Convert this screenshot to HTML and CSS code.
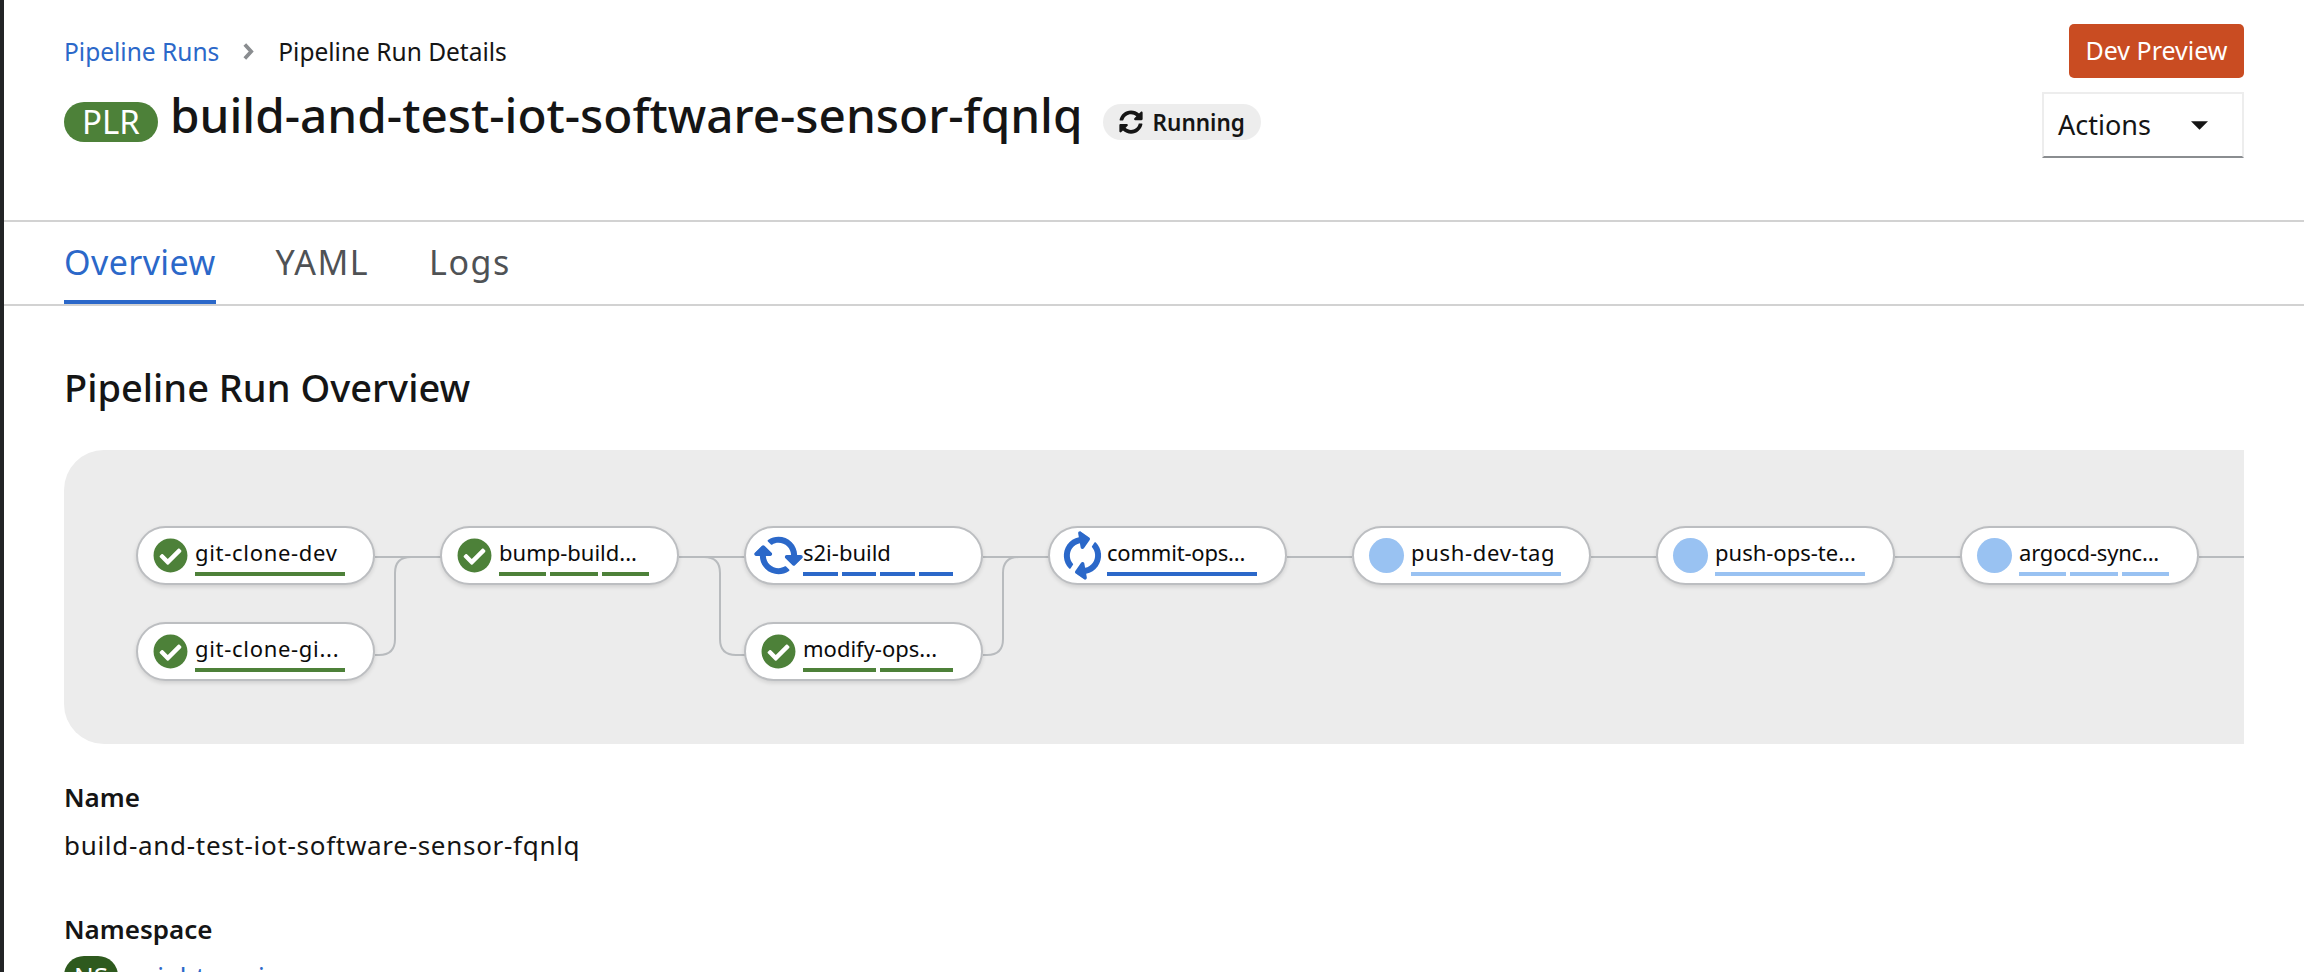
FILE: index.html
```html
<!DOCTYPE html>
<html lang="en-US">
<head>
    <meta charset="UTF-8" />
    <title>Pipeline Run Details</title>
    <link rel="stylesheet" href="styles.css">
</head>
<body>
    <div class="page">
        <header class="head">
            <div class="head-left">
                <nav class="crumbs">
                    <a href="#">Pipeline Runs</a>
                    <svg class="crumb-sep" viewBox="0 0 10 16"><path d="M2 1.500 8 8l-6 6.500" fill="none" stroke="#8a8d90" stroke-width="3.500"/></svg>
                    <span>Pipeline Run Details</span>
                </nav>
                <div class="title-row">
                    <span class="plr">PLR</span>
                    <h1>build-and-test-iot-software-sensor-fqnlq</h1>
                    <span class="status">
                        <svg class="status-icon" viewBox="0 0 512 512"><use href="#sync"/></svg>
                        Running
                    </span>
                </div>
            </div>
            <div class="head-right">
                <span class="preview">Dev Preview</span>
                <button class="actions">Actions <svg class="caret" viewBox="0 0 16 10"><path d="M0 1h16L8 9z" fill="#151515"/></svg></button>
            </div>
        </header>

        <nav class="tabs">
            <a class="tab active" href="#">Overview</a>
            <a class="tab" href="#">YAML</a>
            <a class="tab" href="#">Logs</a>
        </nav>

        <main class="main">
            <h2>Pipeline Run Overview</h2>

            <div class="graph">
                <!-- edges are drawn under the nodes, in graph coordinates -->
                <svg class="edges" width="2180" height="294" fill="none" stroke="#b8bbbe" stroke-width="2">
                    <path d="M311 107H377"/>
                    <path d="M311 205h4q16 0 16-16V123q0-16 16-16"/>
                    <path d="M615 107H681"/>
                    <path d="M640 107q16 0 16 16v66q0 16 16 16h9"/>
                    <path d="M919 107H985"/>
                    <path d="M919 205h4q16 0 16-16V123q0-16 16-16"/>
                    <path d="M1223 107H1288"/>
                    <path d="M1527 107H1593"/>
                    <path d="M1831 107H1897"/>
                    <path d="M2135 107H2180"/>
                </svg>

                <div class="col">
                    <div class="node">
                        <svg class="node-icon green" viewBox="0 0 512 512"><use href="#check"/></svg>
                        <div class="node-body">
                            <span class="node-name wide">git-clone-dev</span>
                            <div class="bars green"><i></i></div>
                        </div>
                    </div>
                    <div class="node">
                        <svg class="node-icon green" viewBox="0 0 512 512"><use href="#check"/></svg>
                        <div class="node-body">
                            <span class="node-name wide">git-clone-gi...</span>
                            <div class="bars green"><i></i></div>
                        </div>
                    </div>
                </div>

                <div class="col">
                    <div class="node">
                        <svg class="node-icon green" viewBox="0 0 512 512"><use href="#check"/></svg>
                        <div class="node-body">
                            <span class="node-name">bump-build...</span>
                            <div class="bars green"><i></i><i></i><i></i></div>
                        </div>
                    </div>
                </div>

                <div class="col">
                    <div class="node">
                        <svg class="node-spin spin-a" viewBox="0 0 512 512"><use href="#sync"/></svg>
                        <div class="node-body">
                            <span class="node-name">s2i-build</span>
                            <div class="bars blue"><i></i><i></i><i></i><i></i></div>
                        </div>
                    </div>
                    <div class="node">
                        <svg class="node-icon green" viewBox="0 0 512 512"><use href="#check"/></svg>
                        <div class="node-body">
                            <span class="node-name">modify-ops...</span>
                            <div class="bars green"><i></i><i></i></div>
                        </div>
                    </div>
                </div>

                <div class="col">
                    <div class="node">
                        <svg class="node-spin spin-b" viewBox="0 0 512 512"><use href="#sync"/></svg>
                        <div class="node-body">
                            <span class="node-name narrow">commit-ops...</span>
                            <div class="bars blue"><i></i></div>
                        </div>
                    </div>
                </div>

                <div class="col">
                    <div class="node">
                        <span class="node-dot"></span>
                        <div class="node-body">
                            <span class="node-name wide">push-dev-tag</span>
                            <div class="bars light"><i></i></div>
                        </div>
                    </div>
                </div>

                <div class="col">
                    <div class="node">
                        <span class="node-dot"></span>
                        <div class="node-body">
                            <span class="node-name">push-ops-te...</span>
                            <div class="bars light"><i></i></div>
                        </div>
                    </div>
                </div>

                <div class="col">
                    <div class="node">
                        <span class="node-dot"></span>
                        <div class="node-body">
                            <span class="node-name narrow">argocd-sync...</span>
                            <div class="bars light"><i></i><i></i><i></i></div>
                        </div>
                    </div>
                </div>
            </div>

            <dl class="details">
                <dt>Name</dt>
                <dd>build-and-test-iot-software-sensor-fqnlq</dd>
                <dt>Namespace</dt>
                <dd class="ns-row"><span class="ns">NS</span> <a href="#">wrighton-ci</a></dd>
            </dl>
        </main>
    </div>

    <svg class="defs" width="0" height="0">
        <symbol id="sync" viewBox="0 0 512 512"><path fill="currentColor" d="M370.72 133.28C339.458 104.008 298.888 87.962 255.848 88c-77.458.068-144.328 53.178-162.791 126.85-1.344 5.363-6.122 9.15-11.651 9.15H24.103c-7.498 0-13.194-6.807-11.807-14.176C33.933 94.924 134.813 8 256 8c66.448 0 126.791 26.136 171.315 68.685L463.03 40.97C478.149 25.851 504 36.559 504 57.941V192c0 13.255-10.745 24-24 24H345.941c-21.382 0-32.09-25.851-16.971-40.971l41.75-41.749zM32 296h134.059c21.382 0 32.09 25.851 16.971 40.971l-41.75 41.75c31.262 29.273 71.835 45.319 114.876 45.28 77.418-.07 144.315-53.144 162.787-126.849 1.344-5.363 6.122-9.15 11.651-9.15h57.304c7.498 0 13.194 6.807 11.807 14.176C478.067 417.076 377.187 504 256 504c-66.448 0-126.791-26.136-171.315-68.685L48.97 471.03C33.851 486.149 8 475.441 8 454.059V320c0-13.255 10.745-24 24-24z"/></symbol>
        <symbol id="check" viewBox="0 0 512 512"><path fill="currentColor" d="M504 256c0 136.967-111.033 248-248 248S8 392.967 8 256 119.033 8 256 8s248 111.033 248 248zM227.314 387.314l184-184c6.248-6.248 6.248-16.379 0-22.627l-22.627-22.627c-6.248-6.249-16.379-6.249-22.628 0L216 308.118l-70.059-70.059c-6.248-6.248-16.379-6.248-22.628 0l-22.627 22.627c-6.248 6.248-6.248 16.379 0 22.627l104 104c6.249 6.25 16.379 6.25 22.628.001z"/></symbol>
    </svg>
</body>
</html>
```

FILE: styles.css
```css
* {
    margin: 0;
    padding: 0;
    box-sizing: border-box;
}

html, body {
    height: 972px;
    overflow: hidden;
}

body {
    font-family: 'Noto Sans', sans-serif;
    font-size: 24px;
    color: #151515;
    background: #fff;
}

a {
    color: #2b68c9;
    text-decoration: none;
}

.page {
    position: relative;
    border-left: 4px solid #222426;
    height: 972px;
    overflow: hidden;
}

/* small dark notch in the window edge */
.page::before {
    content: "";
    position: absolute;
    left: -4px;
    top: 36px;
    width: 4px;
    height: 2px;
    background: #000;
}

.defs {
    position: absolute;
}

/* Header */
.head {
    display: flex;
    justify-content: space-between;
    height: 222px;
    padding: 24px 60px 0 60px;
    border-bottom: 2px solid #d2d2d2;
}

.crumbs {
    display: flex;
    align-items: center;
    height: 54px;
    font-size: 24.500px;
}

.crumb-sep {
    width: 12px;
    height: 17px;
    margin: 0 24px 0 23px;
}

.title-row {
    display: flex;
    align-items: center;
    height: 40px;
    margin-top: 24px;
}

.plr {
    display: inline-block;
    width: 94px;
    height: 40px;
    line-height: 40px;
    border-radius: 20px;
    background: #4d8139;
    color: #fff;
    font-size: 33px;
    text-align: center;
}

h1 {
    font-size: 47.700px;
    font-weight: 500;
    line-height: 40px;
    margin: 0 0 15px 12px;
    white-space: nowrap;
}

.status {
    display: inline-flex;
    align-items: center;
    height: 36px;
    padding: 0 16px;
    margin-left: 20px;
    border-radius: 18px;
    background: #ededed;
    font-size: 22.500px;
    font-weight: 600;
}

.status-icon {
    width: 24px;
    height: 24px;
    margin-right: 10px;
}

.head-right {
    display: flex;
    flex-direction: column;
    align-items: flex-end;
    gap: 14px;
}

.preview {
    display: block;
    width: 175px;
    height: 54px;
    line-height: 52px;
    border-radius: 5px;
    background: #c94c22;
    color: #fff;
    font-size: 25px;
    text-align: center;
}

.actions {
    display: flex;
    align-items: center;
    justify-content: space-between;
    width: 202px;
    height: 66px;
    padding: 0 34px 0 14px;
    background: #fff;
    border: 2px solid #ededed;
    border-bottom-color: #8a8d90;
    font: inherit;
    font-size: 27px;
    line-height: 60px;
    color: #151515;
}

.caret {
    width: 17px;
    height: 11px;
}

/* Tabs */
.tabs {
    display: flex;
    gap: 60px;
    height: 84px;
    padding-left: 60px;
    border-bottom: 2px solid #d2d2d2;
}

.tab {
    display: block;
    height: 82px;
    line-height: 80px;
    font-size: 34px;
    letter-spacing: 1.500px;
    color: #4f5255;
}

.tab.active {
    letter-spacing: 0.400px;
    color: #2b68c9;
    border-bottom: 4px solid #2b68c9;
}

/* Overview */
.main {
    padding: 55px 60px 0 60px;
}

h2 {
    height: 54px;
    line-height: 52px;
    font-size: 38px;
    font-weight: 500;
}

.graph {
    position: relative;
    display: flex;
    gap: 65px;
    height: 294px;
    margin-top: 35px;
    padding: 76px 0 0 72px;
    background: #ececec;
    border-radius: 40px 0 0 40px;
}

.edges {
    position: absolute;
    left: 0;
    top: 0;
}

.col {
    position: relative;
    display: flex;
    flex-direction: column;
    gap: 37px;
}

.node {
    display: flex;
    width: 239px;
    height: 59px;
    padding: 10px 0 0 15px;
    background: #fff;
    border: 2px solid #bcbec1;
    border-radius: 30px;
    box-shadow: 0 2px 4px rgba(0, 0, 0, 0.12);
}

.node-icon, .node-dot {
    flex: none;
    width: 35px;
    height: 35px;
}

.node-icon.green {
    color: #4d8139;
}

.node-dot {
    border-radius: 50%;
    background: #99c2f2;
}

.node-spin {
    flex: none;
    width: 35px;
    height: 35px;
    color: #2b68c9;
}

.spin-a {
    transform: rotate(45deg) scale(1.1);
}

.spin-b {
    transform: rotate(-55deg) scale(1.1);
}

.node-body {
    width: 150px;
    margin-left: 7px;
}

.node-name {
    display: block;
    height: 34px;
    line-height: 29px;
    font-size: 22px;
    color: #0b0b0b;
    white-space: nowrap;
}

.node-name.wide {
    letter-spacing: 0.700px;
}

.node-name.narrow {
    letter-spacing: -0.200px;
}

.bars {
    display: flex;
    gap: 4px;
    height: 4px;
}

.bars i {
    flex: 1;
}

.bars.green i {
    background: #4d8139;
}

.bars.blue i {
    background: #2b68c9;
}

.bars.light i {
    background: #99c2f2;
}

/* Details */
.details {
    margin-top: 36px;
}

dt {
    height: 36px;
    line-height: 34px;
    font-size: 26px;
    font-weight: 600;
}

dd {
    height: 96px;
    line-height: 58px;
    font-size: 26px;
    letter-spacing: 0.700px;
}

.ns-row {
    display: flex;
    align-items: flex-start;
    gap: 8px;
    margin-top: 8px;
    line-height: 40px;
    letter-spacing: 0;
}

.ns {
    display: inline-block;
    width: 54px;
    height: 40px;
    line-height: 40px;
    border-radius: 20px;
    background: #2e5a1e;
    color: #fff;
    text-align: center;
}
```
